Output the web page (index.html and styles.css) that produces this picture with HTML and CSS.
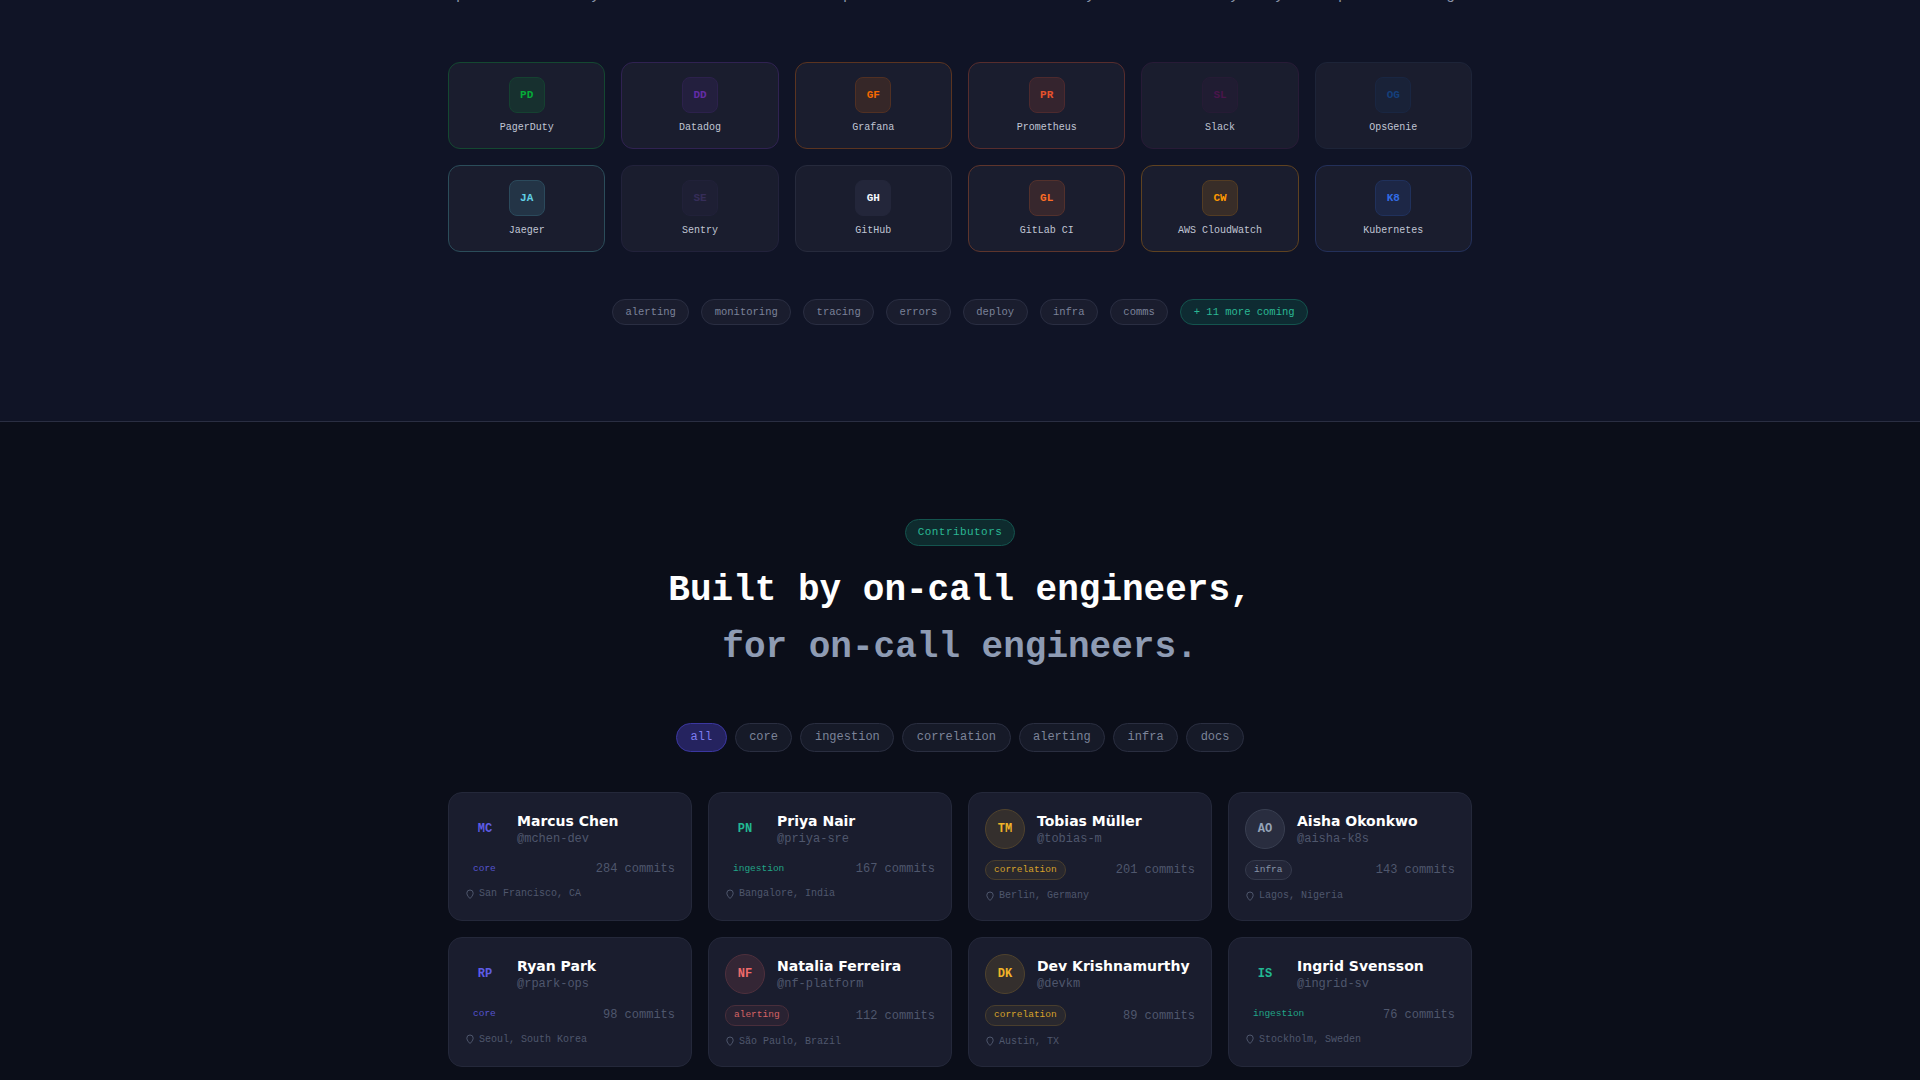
FILE: index.html
```html
<!DOCTYPE html>
<html lang="en">
<head>
<meta charset="utf-8">
<title>Integrations and contributors</title>
<link rel="stylesheet" href="styles.css">
</head>
<body>
<section class="integrations">
  <div class="wrap">
    <p class="lead">Open hooks on any tool the on-call crew can pick and route each alert by service then by many team plans and logs.</p>
    <div class="int-grid">
      <div class="int-card t-pd"><span class="int-icon">PD</span><span class="int-name">PagerDuty</span></div>
      <div class="int-card t-dd"><span class="int-icon">DD</span><span class="int-name">Datadog</span></div>
      <div class="int-card t-gf"><span class="int-icon">GF</span><span class="int-name">Grafana</span></div>
      <div class="int-card t-pr"><span class="int-icon">PR</span><span class="int-name">Prometheus</span></div>
      <div class="int-card t-sl"><span class="int-icon">SL</span><span class="int-name">Slack</span></div>
      <div class="int-card t-og"><span class="int-icon">OG</span><span class="int-name">OpsGenie</span></div>
      <div class="int-card t-ja"><span class="int-icon">JA</span><span class="int-name">Jaeger</span></div>
      <div class="int-card t-se"><span class="int-icon">SE</span><span class="int-name">Sentry</span></div>
      <div class="int-card t-gh"><span class="int-icon">GH</span><span class="int-name">GitHub</span></div>
      <div class="int-card t-gl"><span class="int-icon">GL</span><span class="int-name">GitLab CI</span></div>
      <div class="int-card t-cw"><span class="int-icon">CW</span><span class="int-name">AWS CloudWatch</span></div>
      <div class="int-card t-k8"><span class="int-icon">K8</span><span class="int-name">Kubernetes</span></div>
    </div>
    <div class="chips">
      <span class="chip">alerting</span>
      <span class="chip">monitoring</span>
      <span class="chip">tracing</span>
      <span class="chip">errors</span>
      <span class="chip">deploy</span>
      <span class="chip">infra</span>
      <span class="chip">comms</span>
      <span class="chip chip-more">+ 11 more coming</span>
    </div>
  </div>
</section>
<section class="contributors">
  <div class="wrap">
    <div class="head">
      <span class="badge">Contributors</span>
      <h2 class="title">Built by on-call engineers,<span class="title-sub">for on-call engineers.</span></h2>
    </div>
    <div class="filters">
      <span class="filter filter-on">all</span>
      <span class="filter">core</span>
      <span class="filter">ingestion</span>
      <span class="filter">correlation</span>
      <span class="filter">alerting</span>
      <span class="filter">infra</span>
      <span class="filter">docs</span>
    </div>
    <div class="people">
      <article class="person r-core">
        <div class="person-top"><span class="avatar">MC</span><div class="who"><div class="name">Marcus Chen</div><div class="handle">@mchen-dev</div></div></div>
        <div class="stats"><span class="role">core</span><span class="commits">284 commits</span></div>
        <div class="place"><svg class="pin" viewBox="0 0 10 10"><path d="M5 1a3.2 3.2 0 0 0-3.2 3.2c0 2.4 3.2 5.3 3.2 5.3s3.2-2.9 3.2-5.3A3.2 3.2 0 0 0 5 1z"/></svg>San Francisco, CA</div>
      </article>
      <article class="person r-ingestion">
        <div class="person-top"><span class="avatar">PN</span><div class="who"><div class="name">Priya Nair</div><div class="handle">@priya-sre</div></div></div>
        <div class="stats"><span class="role">ingestion</span><span class="commits">167 commits</span></div>
        <div class="place"><svg class="pin" viewBox="0 0 10 10"><path d="M5 1a3.2 3.2 0 0 0-3.2 3.2c0 2.4 3.2 5.3 3.2 5.3s3.2-2.9 3.2-5.3A3.2 3.2 0 0 0 5 1z"/></svg>Bangalore, India</div>
      </article>
      <article class="person r-correlation">
        <div class="person-top"><span class="avatar">TM</span><div class="who"><div class="name">Tobias Müller</div><div class="handle">@tobias-m</div></div></div>
        <div class="stats"><span class="role">correlation</span><span class="commits">201 commits</span></div>
        <div class="place"><svg class="pin" viewBox="0 0 10 10"><path d="M5 1a3.2 3.2 0 0 0-3.2 3.2c0 2.4 3.2 5.3 3.2 5.3s3.2-2.9 3.2-5.3A3.2 3.2 0 0 0 5 1z"/></svg>Berlin, Germany</div>
      </article>
      <article class="person r-infra">
        <div class="person-top"><span class="avatar">AO</span><div class="who"><div class="name">Aisha Okonkwo</div><div class="handle">@aisha-k8s</div></div></div>
        <div class="stats"><span class="role">infra</span><span class="commits">143 commits</span></div>
        <div class="place"><svg class="pin" viewBox="0 0 10 10"><path d="M5 1a3.2 3.2 0 0 0-3.2 3.2c0 2.4 3.2 5.3 3.2 5.3s3.2-2.9 3.2-5.3A3.2 3.2 0 0 0 5 1z"/></svg>Lagos, Nigeria</div>
      </article>
      <article class="person r-core">
        <div class="person-top"><span class="avatar">RP</span><div class="who"><div class="name">Ryan Park</div><div class="handle">@rpark-ops</div></div></div>
        <div class="stats"><span class="role">core</span><span class="commits">98 commits</span></div>
        <div class="place"><svg class="pin" viewBox="0 0 10 10"><path d="M5 1a3.2 3.2 0 0 0-3.2 3.2c0 2.4 3.2 5.3 3.2 5.3s3.2-2.9 3.2-5.3A3.2 3.2 0 0 0 5 1z"/></svg>Seoul, South Korea</div>
      </article>
      <article class="person r-alerting">
        <div class="person-top"><span class="avatar">NF</span><div class="who"><div class="name">Natalia Ferreira</div><div class="handle">@nf-platform</div></div></div>
        <div class="stats"><span class="role">alerting</span><span class="commits">112 commits</span></div>
        <div class="place"><svg class="pin" viewBox="0 0 10 10"><path d="M5 1a3.2 3.2 0 0 0-3.2 3.2c0 2.4 3.2 5.3 3.2 5.3s3.2-2.9 3.2-5.3A3.2 3.2 0 0 0 5 1z"/></svg>São Paulo, Brazil</div>
      </article>
      <article class="person r-correlation">
        <div class="person-top"><span class="avatar">DK</span><div class="who"><div class="name">Dev Krishnamurthy</div><div class="handle">@devkm</div></div></div>
        <div class="stats"><span class="role">correlation</span><span class="commits">89 commits</span></div>
        <div class="place"><svg class="pin" viewBox="0 0 10 10"><path d="M5 1a3.2 3.2 0 0 0-3.2 3.2c0 2.4 3.2 5.3 3.2 5.3s3.2-2.9 3.2-5.3A3.2 3.2 0 0 0 5 1z"/></svg>Austin, TX</div>
      </article>
      <article class="person r-ingestion">
        <div class="person-top"><span class="avatar">IS</span><div class="who"><div class="name">Ingrid Svensson</div><div class="handle">@ingrid-sv</div></div></div>
        <div class="stats"><span class="role">ingestion</span><span class="commits">76 commits</span></div>
        <div class="place"><svg class="pin" viewBox="0 0 10 10"><path d="M5 1a3.2 3.2 0 0 0-3.2 3.2c0 2.4 3.2 5.3 3.2 5.3s3.2-2.9 3.2-5.3A3.2 3.2 0 0 0 5 1z"/></svg>Stockholm, Sweden</div>
      </article>
    </div>
  </div>
</section>
</body>
</html>
```
FILE: styles.css
```css
* { box-sizing: border-box; }
html, body { margin: 0; height: 1080px; overflow: hidden; }
body { background: #0b0e19; font-family: "Liberation Mono", monospace; }

.wrap { width: 1024px; margin: 0 auto; }

.integrations {
  margin-top: -24px;
  background: #101426;
  border-bottom: 1px solid #2a2e42;
  padding: 8px 0 96px;
}
.lead {
  margin: 0 -20px 54px;
  font-size: 15px;
  line-height: 24px;
  text-align: center;
  white-space: nowrap;
  color: #8b94aa;
}
.int-grid {
  display: grid;
  grid-template-columns: repeat(6, 1fr);
  gap: 16px;
}
.int-card {
  --c: #ffffff;
  display: flex;
  flex-direction: column;
  align-items: center;
  padding: 14px 8px 13px;
  background: #1a1d2e;
  border: 1px solid color-mix(in srgb, var(--c) 30%, #1a1d2e);
  border-radius: 12px;
}
.int-icon {
  display: flex;
  flex: none;
  align-items: center;
  justify-content: center;
  width: 36px;
  height: 36px;
  margin-bottom: 7px;
  font-size: 11px;
  font-weight: 700;
  color: var(--c);
  background: color-mix(in srgb, var(--c) 13%, #1a1d2e);
  border: 1px solid color-mix(in srgb, var(--c) 25%, #1a1d2e);
  border-radius: 8px;
}
.int-name { font-size: 10px; line-height: 15px; color: #c0c5d4; }
.t-pd { --c: #06ac38; }
.t-dd { --c: #632ca6; }
.t-gf { --c: #f46800; }
.t-pr { --c: #e6522c; }
.t-sl { --c: #4a154b; }
.t-og { --c: #14407c; }
.t-ja { --c: #60d0e4; }
.t-se { --c: #362d59; }
.t-gl { --c: #fc6d26; }
.t-cw { --c: #ff9900; }
.t-k8 { --c: #326ce5; }
.t-gh { --c: #f4f6fb; }
.t-gh.int-card { border-color: #262a3c; }
.t-gh .int-icon { background: #23263a; border-color: #23263a; }
.t-og.int-card { border-color: #1d2438; }
.t-k8.int-card { border-color: #23305a; }
.t-ja.int-card { border-color: #2b4d5a; }

.chips {
  display: flex;
  justify-content: center;
  gap: 12px;
  margin-top: 47px;
}
.chip {
  height: 26px;
  padding: 0 12.45px;
  font-size: 10.5px;
  line-height: 24px;
  color: #7a8299;
  background: #1a1d2e;
  border: 1px solid #2a2e42;
  border-radius: 13px;
}
.chip-more { color: #2bb894; background: #0e2b32; border-color: #14544e; }

.contributors { padding-top: 97px; }
.head { display: flex; flex-direction: column; align-items: center; }
.badge {
  height: 26.5px;
  padding: 0 12px;
  font-size: 11px;
  line-height: 24.5px;
  letter-spacing: 0.44px;
  color: #2bb894;
  background: #0e2b2e;
  border: 1px solid #14544e;
  border-radius: 14px;
}
.title {
  margin: 16.5px 0 0;
  font-size: 36px;
  font-weight: 700;
  line-height: 57px;
  text-align: center;
  color: #ffffff;
}
.title-sub { display: block; color: #8e9bb3; }

.filters {
  display: flex;
  justify-content: center;
  gap: 8px;
  margin-top: 47px;
}
.filter {
  height: 28.5px;
  padding: 0 13.5px;
  font-size: 12px;
  line-height: 26.5px;
  color: #7c8499;
  background: #161a28;
  border: 1px solid #2a2e40;
  border-radius: 15px;
}
.filter-on { color: #7c7cf0; background: #25235f; border-color: #3b37a0; }

.people {
  display: grid;
  grid-template-columns: repeat(4, 1fr);
  gap: 16px;
  margin-top: 40.7px;
}
.person {
  --c: #94a3b8;
  padding: 16px;
  background: #1a1d2e;
  border: 1px solid #24283a;
  border-radius: 14px;
}
.person-top { display: flex; align-items: center; gap: 12px; }
.avatar {
  display: flex;
  align-items: center;
  justify-content: center;
  flex: none;
  width: 40px;
  height: 40px;
  font-size: 12px;
  font-weight: 700;
  color: var(--c);
  background: color-mix(in srgb, var(--c) 12%, #1a1d2e);
  border: 1px solid color-mix(in srgb, var(--c) 25%, #1a1d2e);
  border-radius: 50%;
}
.name {
  font-family: "DejaVu Sans", sans-serif;
  font-size: 14px;
  font-weight: 700;
  line-height: 19px;
  color: #ffffff;
  white-space: nowrap;
}
.handle { font-size: 12px; line-height: 16px; color: #4f576d; }
.stats {
  display: flex;
  align-items: center;
  justify-content: space-between;
  margin-top: 11px;
}
.role {
  padding: 2px 8px;
  font-size: 9.5px;
  line-height: 14.25px;
  color: color-mix(in srgb, var(--c) 88%, #1a1d2e);
  background: color-mix(in srgb, var(--c) 7%, #1a1d2e);
  border: 1px solid color-mix(in srgb, var(--c) 22%, #1a1d2e);
  border-radius: 10px;
}
.commits { font-size: 12px; line-height: 18px; color: #4f576d; }
.place {
  display: flex;
  align-items: center;
  gap: 4px;
  margin: 8px 0 1px;
  font-size: 10px;
  line-height: 15px;
  color: #4f576d;
}
.pin { flex: none; width: 10px; height: 10px; fill: none; stroke: #4f576d; stroke-width: 1; }

.r-core .avatar, .r-ingestion .avatar { background: none; border: 0; }
.r-core .role, .r-ingestion .role { background: none; border: 0; }
.r-core { --c: #5e5ce6; }
.r-ingestion { --c: #22b893; }
.r-correlation { --c: #f0b429; }
.r-infra { --c: #94a3b8; }
.r-alerting { --c: #ef6b6b; }
```
